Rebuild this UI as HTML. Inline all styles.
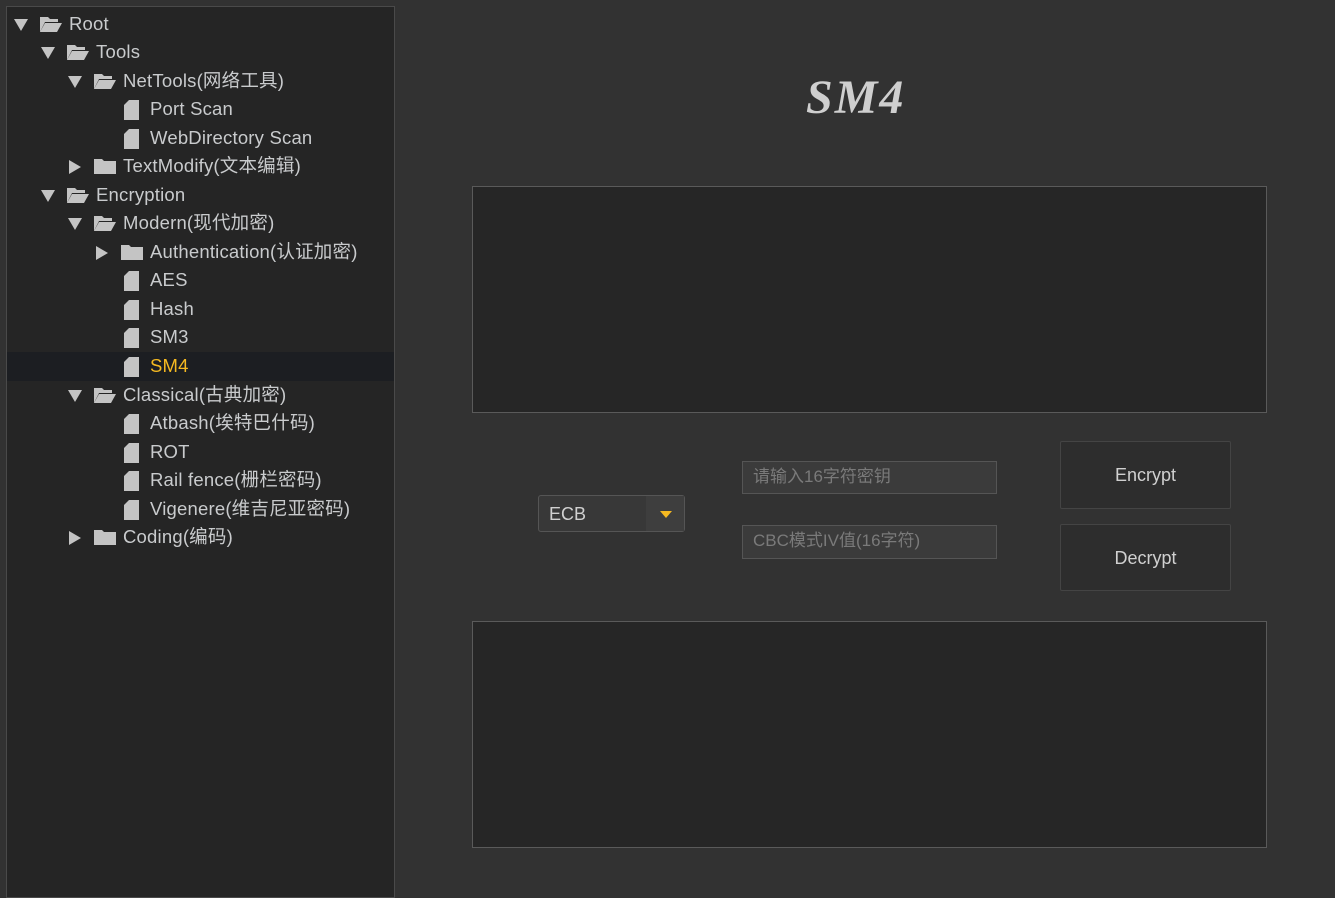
<!DOCTYPE html><html><head><meta charset="utf-8"><style>
body{margin:0;width:1335px;height:891px;background:#323232;position:relative;overflow:hidden;font-family:"Liberation Sans","Noto Sans CJK SC",sans-serif;}
#tree{position:absolute;left:6px;top:6px;width:387px;height:890px;background:#252525;border:1px solid #4a4a4a;}
.r{position:absolute;left:0;width:387px;height:28px;color:#c9cbcd;font-size:18.5px;line-height:28px;letter-spacing:0.2px}
.r.sel{background:#1c1e22;color:#f5b921}
.r span{position:absolute;}
svg{position:absolute}
.box{position:absolute;background:#262626;border:1px solid #5a5a5a;}
.inp{position:absolute;background:#3b3b3b;border:1px solid #555;color:#7a7a7a;font-size:17px;line-height:30px;padding-left:10px;box-sizing:border-box;}
.btn{position:absolute;background:#2d2d2d;border:1px solid #444;border-radius:2px;color:#d0d0d0;font-size:18px;text-align:center;box-sizing:border-box;}
</style></head><body>
<div id="tree">
<div class="r" style="top:3px"><svg style="left:7px;top:9px" width="14" height="12"><path d="M0 0h14L7 12z" fill="#c4c4c4"/></svg><svg style="left:33px;top:7px" width="22" height="15"><path d="M0 0h8l2 2h8v3H5L0 15z" fill="#c4c4c4"/><path d="M5 6h17l-5 9H0z" fill="#c4c4c4"/></svg><span style="left:62px">Root</span></div>
<div class="r" style="top:31px"><svg style="left:34px;top:9px" width="14" height="12"><path d="M0 0h14L7 12z" fill="#c4c4c4"/></svg><svg style="left:60px;top:7px" width="22" height="15"><path d="M0 0h8l2 2h8v3H5L0 15z" fill="#c4c4c4"/><path d="M5 6h17l-5 9H0z" fill="#c4c4c4"/></svg><span style="left:89px">Tools</span></div>
<div class="r" style="top:60px"><svg style="left:61px;top:9px" width="14" height="12"><path d="M0 0h14L7 12z" fill="#c4c4c4"/></svg><svg style="left:87px;top:7px" width="22" height="15"><path d="M0 0h8l2 2h8v3H5L0 15z" fill="#c4c4c4"/><path d="M5 6h17l-5 9H0z" fill="#c4c4c4"/></svg><span style="left:116px">NetTools(网络工具)</span></div>
<div class="r" style="top:88px"><svg style="left:117px;top:5px" width="15" height="20"><path d="M5 0h10v20H0V5z" fill="#c4c4c4"/></svg><span style="left:143px">Port Scan</span></div>
<div class="r" style="top:117px"><svg style="left:117px;top:5px" width="15" height="20"><path d="M5 0h10v20H0V5z" fill="#c4c4c4"/></svg><span style="left:143px">WebDirectory Scan</span></div>
<div class="r" style="top:145px"><svg style="left:62px;top:8px" width="12" height="14"><path d="M0 0v14l12-7z" fill="#c4c4c4"/></svg><svg style="left:87px;top:7px" width="22" height="15"><path d="M0 0h8l2 2h12v13H0z" fill="#c4c4c4"/></svg><span style="left:116px">TextModify(文本编辑)</span></div>
<div class="r" style="top:174px"><svg style="left:34px;top:9px" width="14" height="12"><path d="M0 0h14L7 12z" fill="#c4c4c4"/></svg><svg style="left:60px;top:7px" width="22" height="15"><path d="M0 0h8l2 2h8v3H5L0 15z" fill="#c4c4c4"/><path d="M5 6h17l-5 9H0z" fill="#c4c4c4"/></svg><span style="left:89px">Encryption</span></div>
<div class="r" style="top:202px"><svg style="left:61px;top:9px" width="14" height="12"><path d="M0 0h14L7 12z" fill="#c4c4c4"/></svg><svg style="left:87px;top:7px" width="22" height="15"><path d="M0 0h8l2 2h8v3H5L0 15z" fill="#c4c4c4"/><path d="M5 6h17l-5 9H0z" fill="#c4c4c4"/></svg><span style="left:116px">Modern(现代加密)</span></div>
<div class="r" style="top:231px"><svg style="left:89px;top:8px" width="12" height="14"><path d="M0 0v14l12-7z" fill="#c4c4c4"/></svg><svg style="left:114px;top:7px" width="22" height="15"><path d="M0 0h8l2 2h12v13H0z" fill="#c4c4c4"/></svg><span style="left:143px">Authentication(认证加密)</span></div>
<div class="r" style="top:259px"><svg style="left:117px;top:5px" width="15" height="20"><path d="M5 0h10v20H0V5z" fill="#c4c4c4"/></svg><span style="left:143px">AES</span></div>
<div class="r" style="top:288px"><svg style="left:117px;top:5px" width="15" height="20"><path d="M5 0h10v20H0V5z" fill="#c4c4c4"/></svg><span style="left:143px">Hash</span></div>
<div class="r" style="top:316px"><svg style="left:117px;top:5px" width="15" height="20"><path d="M5 0h10v20H0V5z" fill="#c4c4c4"/></svg><span style="left:143px">SM3</span></div>
<div class="r sel" style="top:345px;height:29px"><svg style="left:117px;top:5px" width="15" height="20"><path d="M5 0h10v20H0V5z" fill="#c4c4c4"/></svg><span style="left:143px">SM4</span></div>
<div class="r" style="top:374px"><svg style="left:61px;top:9px" width="14" height="12"><path d="M0 0h14L7 12z" fill="#c4c4c4"/></svg><svg style="left:87px;top:7px" width="22" height="15"><path d="M0 0h8l2 2h8v3H5L0 15z" fill="#c4c4c4"/><path d="M5 6h17l-5 9H0z" fill="#c4c4c4"/></svg><span style="left:116px">Classical(古典加密)</span></div>
<div class="r" style="top:402px"><svg style="left:117px;top:5px" width="15" height="20"><path d="M5 0h10v20H0V5z" fill="#c4c4c4"/></svg><span style="left:143px">Atbash(埃特巴什码)</span></div>
<div class="r" style="top:431px"><svg style="left:117px;top:5px" width="15" height="20"><path d="M5 0h10v20H0V5z" fill="#c4c4c4"/></svg><span style="left:143px">ROT</span></div>
<div class="r" style="top:459px"><svg style="left:117px;top:5px" width="15" height="20"><path d="M5 0h10v20H0V5z" fill="#c4c4c4"/></svg><span style="left:143px">Rail fence(栅栏密码)</span></div>
<div class="r" style="top:488px"><svg style="left:117px;top:5px" width="15" height="20"><path d="M5 0h10v20H0V5z" fill="#c4c4c4"/></svg><span style="left:143px">Vigenere(维吉尼亚密码)</span></div>
<div class="r" style="top:516px"><svg style="left:62px;top:8px" width="12" height="14"><path d="M0 0v14l12-7z" fill="#c4c4c4"/></svg><svg style="left:87px;top:7px" width="22" height="15"><path d="M0 0h8l2 2h12v13H0z" fill="#c4c4c4"/></svg><span style="left:116px">Coding(编码)</span></div>
</div>
<div style="position:absolute;left:806px;top:70px;font-family:'Liberation Serif',serif;font-style:italic;font-weight:bold;font-size:48px;color:#cfcfcf;letter-spacing:2px">SM4</div>
<div class="box" style="left:472px;top:186px;width:793px;height:225px"></div>
<div class="box" style="left:472px;top:621px;width:793px;height:225px"></div>
<div style="position:absolute;left:538px;top:495px;width:147px;height:37px;background:#383838;border:1px solid #555;border-radius:3px;box-sizing:border-box;color:#d0d0d0;font-size:18px;line-height:36px;padding-left:10px">ECB<div style="position:absolute;right:0;top:0;width:38px;height:35px;background:#3e3e3e"></div><div style="position:absolute;right:12px;top:15px;width:0;height:0;border-left:6px solid transparent;border-right:6px solid transparent;border-top:7px solid #f5b921"></div></div>
<div class="inp" style="left:742px;top:461px;width:255px;height:33px">请输入16字符密钥</div>
<div class="inp" style="left:742px;top:525px;width:255px;height:34px">CBC模式IV值(16字符)</div>
<div class="btn" style="left:1060px;top:441px;width:171px;height:68px;line-height:66px">Encrypt</div>
<div class="btn" style="left:1060px;top:524px;width:171px;height:67px;line-height:66px">Decrypt</div>
</body></html>
